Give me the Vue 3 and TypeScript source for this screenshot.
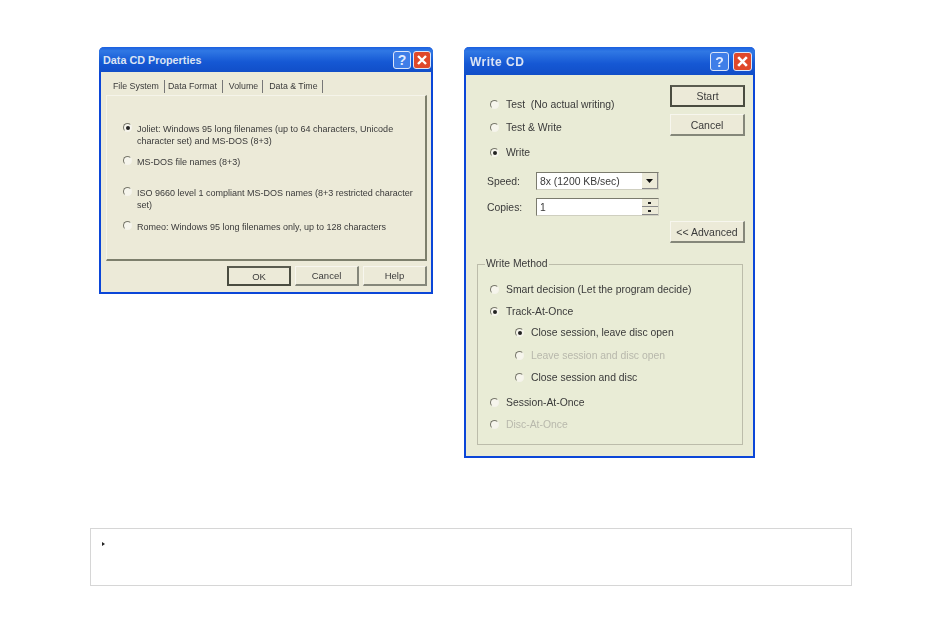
<script setup lang="ts">
interface Opt { label: string; checked?: boolean; disabled?: boolean; sub?: boolean; gap: number }
const tabs: string[] = ['File System', 'Data Format', 'Volume', 'Data & Time']
const fsOpts: { label: string; checked?: boolean; gap: number }[] = [
  { label: 'Joliet: Windows 95 long filenames (up to 64 characters, Unicode character set) and MS-DOS (8+3)', checked: true, gap: 26 },
  { label: 'MS-DOS file names (8+3)', gap: 9 },
  { label: 'ISO 9660 level 1 compliant MS-DOS names (8+3 restricted character set)', gap: 19 },
  { label: 'Romeo: Windows 95 long filenames only, up to 128 characters', gap: 10 },
]
const methods: Opt[] = [
  { label: 'Smart decision (Let the program decide)', gap: 13 },
  { label: 'Track-At-Once', checked: true, gap: 9 },
  { label: 'Close session, leave disc open', checked: true, sub: true, gap: 8 },
  { label: 'Leave session and disc open', disabled: true, sub: true, gap: 10 },
  { label: 'Close session and disc', sub: true, gap: 9 },
  { label: 'Session-At-Once', gap: 12 },
  { label: 'Disc-At-Once', disabled: true, gap: 9 },
]
const modes: { label: string; checked?: boolean; gap: number }[] = [
  { label: 'Test  (No actual writing)', gap: 0 },
  { label: 'Test & Write', gap: 10 },
  { label: 'Write', checked: true, gap: 12 },
]
</script>

<template>
  <div class="page">
    <div class="shots">
      <section class="dialog first">
        <header class="title">
          <span class="title-text">Data CD Properties</span>
          <span class="ctrl help">?</span>
          <span class="ctrl close"><svg width="12" height="12" viewBox="0 0 12 12"><path d="M2 2l8 8M10 2l-8 8" stroke="#fff" stroke-width="2.4" /></svg></span>
        </header>
        <div class="body body-first">
          <div class="tabs">
            <span v-for="(t, i) in tabs" :key="t" class="tab" :class="{ active: i === 0 }">{{ t }}</span>
          </div>
          <div class="panel">
            <label v-for="o in fsOpts" :key="o.label" class="fs-opt" :style="{ marginTop: o.gap + 'px' }">
              <span class="radio" :class="{ on: o.checked }"></span>
              <span class="fs-text">{{ o.label }}</span>
            </label>
          </div>
          <div class="actions">
            <button class="btn def wide">OK</button>
            <button class="btn wide">Cancel</button>
            <button class="btn wide">Help</button>
          </div>
        </div>
      </section>

      <section class="dialog second">
        <header class="title tall">
          <span class="title-text big">Write CD</span>
          <span class="ctrl help large">?</span>
          <span class="ctrl close large"><svg width="13" height="13" viewBox="0 0 12 12"><path d="M2 2l8 8M10 2l-8 8" stroke="#fff" stroke-width="2.4" /></svg></span>
        </header>
        <div class="body body-second">
          <div class="top">
            <div class="left">
              <label v-for="m in modes" :key="m.label" class="opt" :style="{ marginTop: m.gap + 'px' }">
                <span class="radio" :class="{ on: m.checked }"></span>
                <span class="keep">{{ m.label }}</span>
              </label>
              <div class="field speed">
                <span class="field-label">Speed:</span>
                <span class="input">
                  <span class="grow">8x (1200 KB/sec)</span>
                  <span class="drop"><svg width="7" height="4" viewBox="0 0 7 4"><path d="M0 0h7L3.500 4z" fill="#111" /></svg></span>
                </span>
              </div>
              <div class="field copies">
                <span class="field-label">Copies:</span>
                <span class="input">
                  <span class="grow">1</span>
                  <span class="spin"><i></i><i class="low"></i></span>
                </span>
              </div>
            </div>
            <div class="right">
              <button class="btn def side">Start</button>
              <button class="btn side">Cancel</button>
              <button class="btn side advanced">&lt;&lt; Advanced</button>
            </div>
          </div>
          <fieldset class="group">
            <legend>Write Method</legend>
            <label
              v-for="o in methods"
              :key="o.label"
              class="opt"
              :class="{ sub: o.sub, disabled: o.disabled }"
              :style="{ marginTop: o.gap + 'px' }"
            >
              <span class="radio" :class="{ on: o.checked }"></span>
              <span class="keep">{{ o.label }}</span>
            </label>
          </fieldset>
        </div>
      </section>
    </div>

    <div class="note"><span class="caret"></span></div>
  </div>
</template>

<style>
html, body { background: #fff; }
</style>

<style scoped>
.page {
  width: 950px;
  height: 627px;
  box-sizing: border-box;
  padding-top: 47px;
  font-family: "Liberation Sans", Arial, sans-serif;
  font-size: 10.400px;
  color: #3a3a3a;
  overflow: hidden;
}
.shots {
  display: flex;
  align-items: flex-start;
  gap: 31px;
  margin-left: 99px;
  filter: blur(0.45px);
}
.dialog {
  box-sizing: border-box;
  border: 2px solid #0b46d8;
  border-top: 0;
  border-radius: 5px 5px 0 0;
  background: #ecead8;
}
.first { width: 334px; height: 247px; }
.second { width: 291px; height: 411px; background: #e9ebd6; }
.title {
  display: flex;
  align-items: center;
  gap: 2px;
  height: 25px;
  margin: 0 -2px;
  padding: 1px 2px 0 4px;
  box-sizing: border-box;
  border-radius: 5px 5px 0 0;
  background: linear-gradient(#1a5fe0, #3078e4 15%, #1558d4 60%, #114ec8);
}
.tall { height: 28px; gap: 4px; padding-left: 6px; padding-right: 3px; }
.title-text {
  flex: 1;
  color: #dbe4f4;
  font-weight: 700;
  font-size: 10.800px;
}
.big { font-size: 12px; letter-spacing: 0.5px; }
.ctrl {
  display: flex;
  align-items: center;
  justify-content: center;
  width: 18px;
  height: 18px;
  border: 1px solid #dce6f8;
  border-radius: 3px;
  box-sizing: border-box;
}
.large { width: 19px; height: 19px; }
.help {
  background: #3f7ee8;
  color: #dfeaff;
  font-size: 14px;
  font-weight: 700;
}
.close { background: #e0482a; }
.body-first { padding: 4px 3px 0 5px; }
.tabs {
  display: flex;
  height: 19px;
  padding-left: 1px;
  font-size: 8.800px;
}
.tab {
  padding: 0 4px 0 6px;
  height: 13px;
  margin-top: 4px;
  line-height: 13px;
  white-space: nowrap;
  border-right: 1px solid #777;
  box-sizing: content-box;
}
.tab.active { padding: 0 5px 0 6px; }
.tab:nth-child(2) { padding: 0 5px 0 3px; }
.panel {
  box-sizing: border-box;
  width: 321px;
  height: 166px;
  padding: 1px 3px 0 16px;
  border: 1px solid #f5f4ea;
  border-right: 2px solid #7d7f6c;
  border-bottom: 2px solid #7d7f6c;
}
.fs-opt {
  display: flex;
  gap: 5px;
  line-height: 12px;
  font-size: 9px;
}
.fs-text { flex: 1; }
.actions {
  display: flex;
  justify-content: flex-end;
  gap: 4px;
  margin-top: 5px;
  width: 321px;
}
.btn {
  box-sizing: border-box;
  font: inherit;
  color: #3a3a3a;
  background: #ecead8;
  border: 1px solid #f7f6ee;
  border-right: 2px solid #85877a;
  border-bottom: 2px solid #85877a;
  padding: 0;
}
.btn.def {
  border: 2px solid #4a4c40;
  border-top-color: #5a5c50;
}
.wide { width: 64px; height: 20px; font-size: 9.500px; }
.side { width: 75px; height: 22px; font-size: 10.500px; }
.body-second { padding: 0 8px 0 11px; }
.top { display: flex; justify-content: space-between; height: 183px; }
.left { padding: 23px 0 0 13px; width: 190px; box-sizing: border-box; }
.right { display: flex; flex-direction: column; gap: 7px; padding-top: 10px; }
.advanced { margin-top: 78px; }
.opt {
  display: flex;
  align-items: center;
  gap: 7px;
  height: 13px;
  white-space: pre;
}
.keep { white-space: pre; }
.radio {
  flex: none;
  position: relative;
  width: 9px;
  height: 9px;
  box-sizing: border-box;
  border-radius: 50%;
  border: 1px solid #f4f3ea;
  border-top-color: #77776a;
  border-left-color: #77776a;
  background: #f6f5ec;
}
.radio.on::after {
  content: "";
  position: absolute;
  left: 1.500px;
  top: 1.500px;
  width: 4px;
  height: 4px;
  border-radius: 50%;
  background: #222;
}
.field {
  display: flex;
  align-items: center;
  margin-left: -3px;
  height: 18px;
}
.speed { margin-top: 13px; }
.copies { margin-top: 8px; }
.field-label { width: 49px; }
.input {
  display: flex;
  align-items: center;
  box-sizing: border-box;
  width: 123px;
  height: 18px;
  padding: 0 0 0 3px;
  background: #fff;
  border: 1px solid #cfcfc0;
  border-top-color: #7b7b6e;
  border-left-color: #7b7b6e;
}
.grow { flex: 1; white-space: nowrap; }
.drop {
  display: flex;
  align-items: center;
  justify-content: center;
  width: 16px;
  height: 16px;
  background: #ecead8;
  border-right: 1px solid #888;
  border-bottom: 1px solid #888;
  box-sizing: border-box;
}
.spin { display: flex; flex-direction: column; width: 16px; height: 16px; }
.spin i {
  flex: 1;
  background: #ecead8;
  border-bottom: 1px solid #888;
  position: relative;
}
.spin i::after {
  content: "";
  position: absolute;
  left: 6px;
  top: 3px;
  width: 3px;
  height: 2px;
  background: #222;
}
.group {
  box-sizing: border-box;
  width: 266px;
  height: 187px;
  margin: 0;
  padding: 0 0 0 12px;
  border: 1px solid #bcbcaa;
  background: #e9ecd6;
}
legend { padding: 0 1px; margin-left: -5px; line-height: 12px; }
.sub { margin-left: 25px; }
.disabled { color: #b8b8ac; }
.note {
  position: relative;
  box-sizing: border-box;
  width: 762px;
  height: 58px;
  margin: 70px 0 0 90px;
  border: 1px solid #d6d6d6;
}
.caret {
  position: absolute;
  left: 11px;
  top: 13px;
  border-left: 3px solid #222;
  border-top: 2.500px solid transparent;
  border-bottom: 2.500px solid transparent;
}
</style>
